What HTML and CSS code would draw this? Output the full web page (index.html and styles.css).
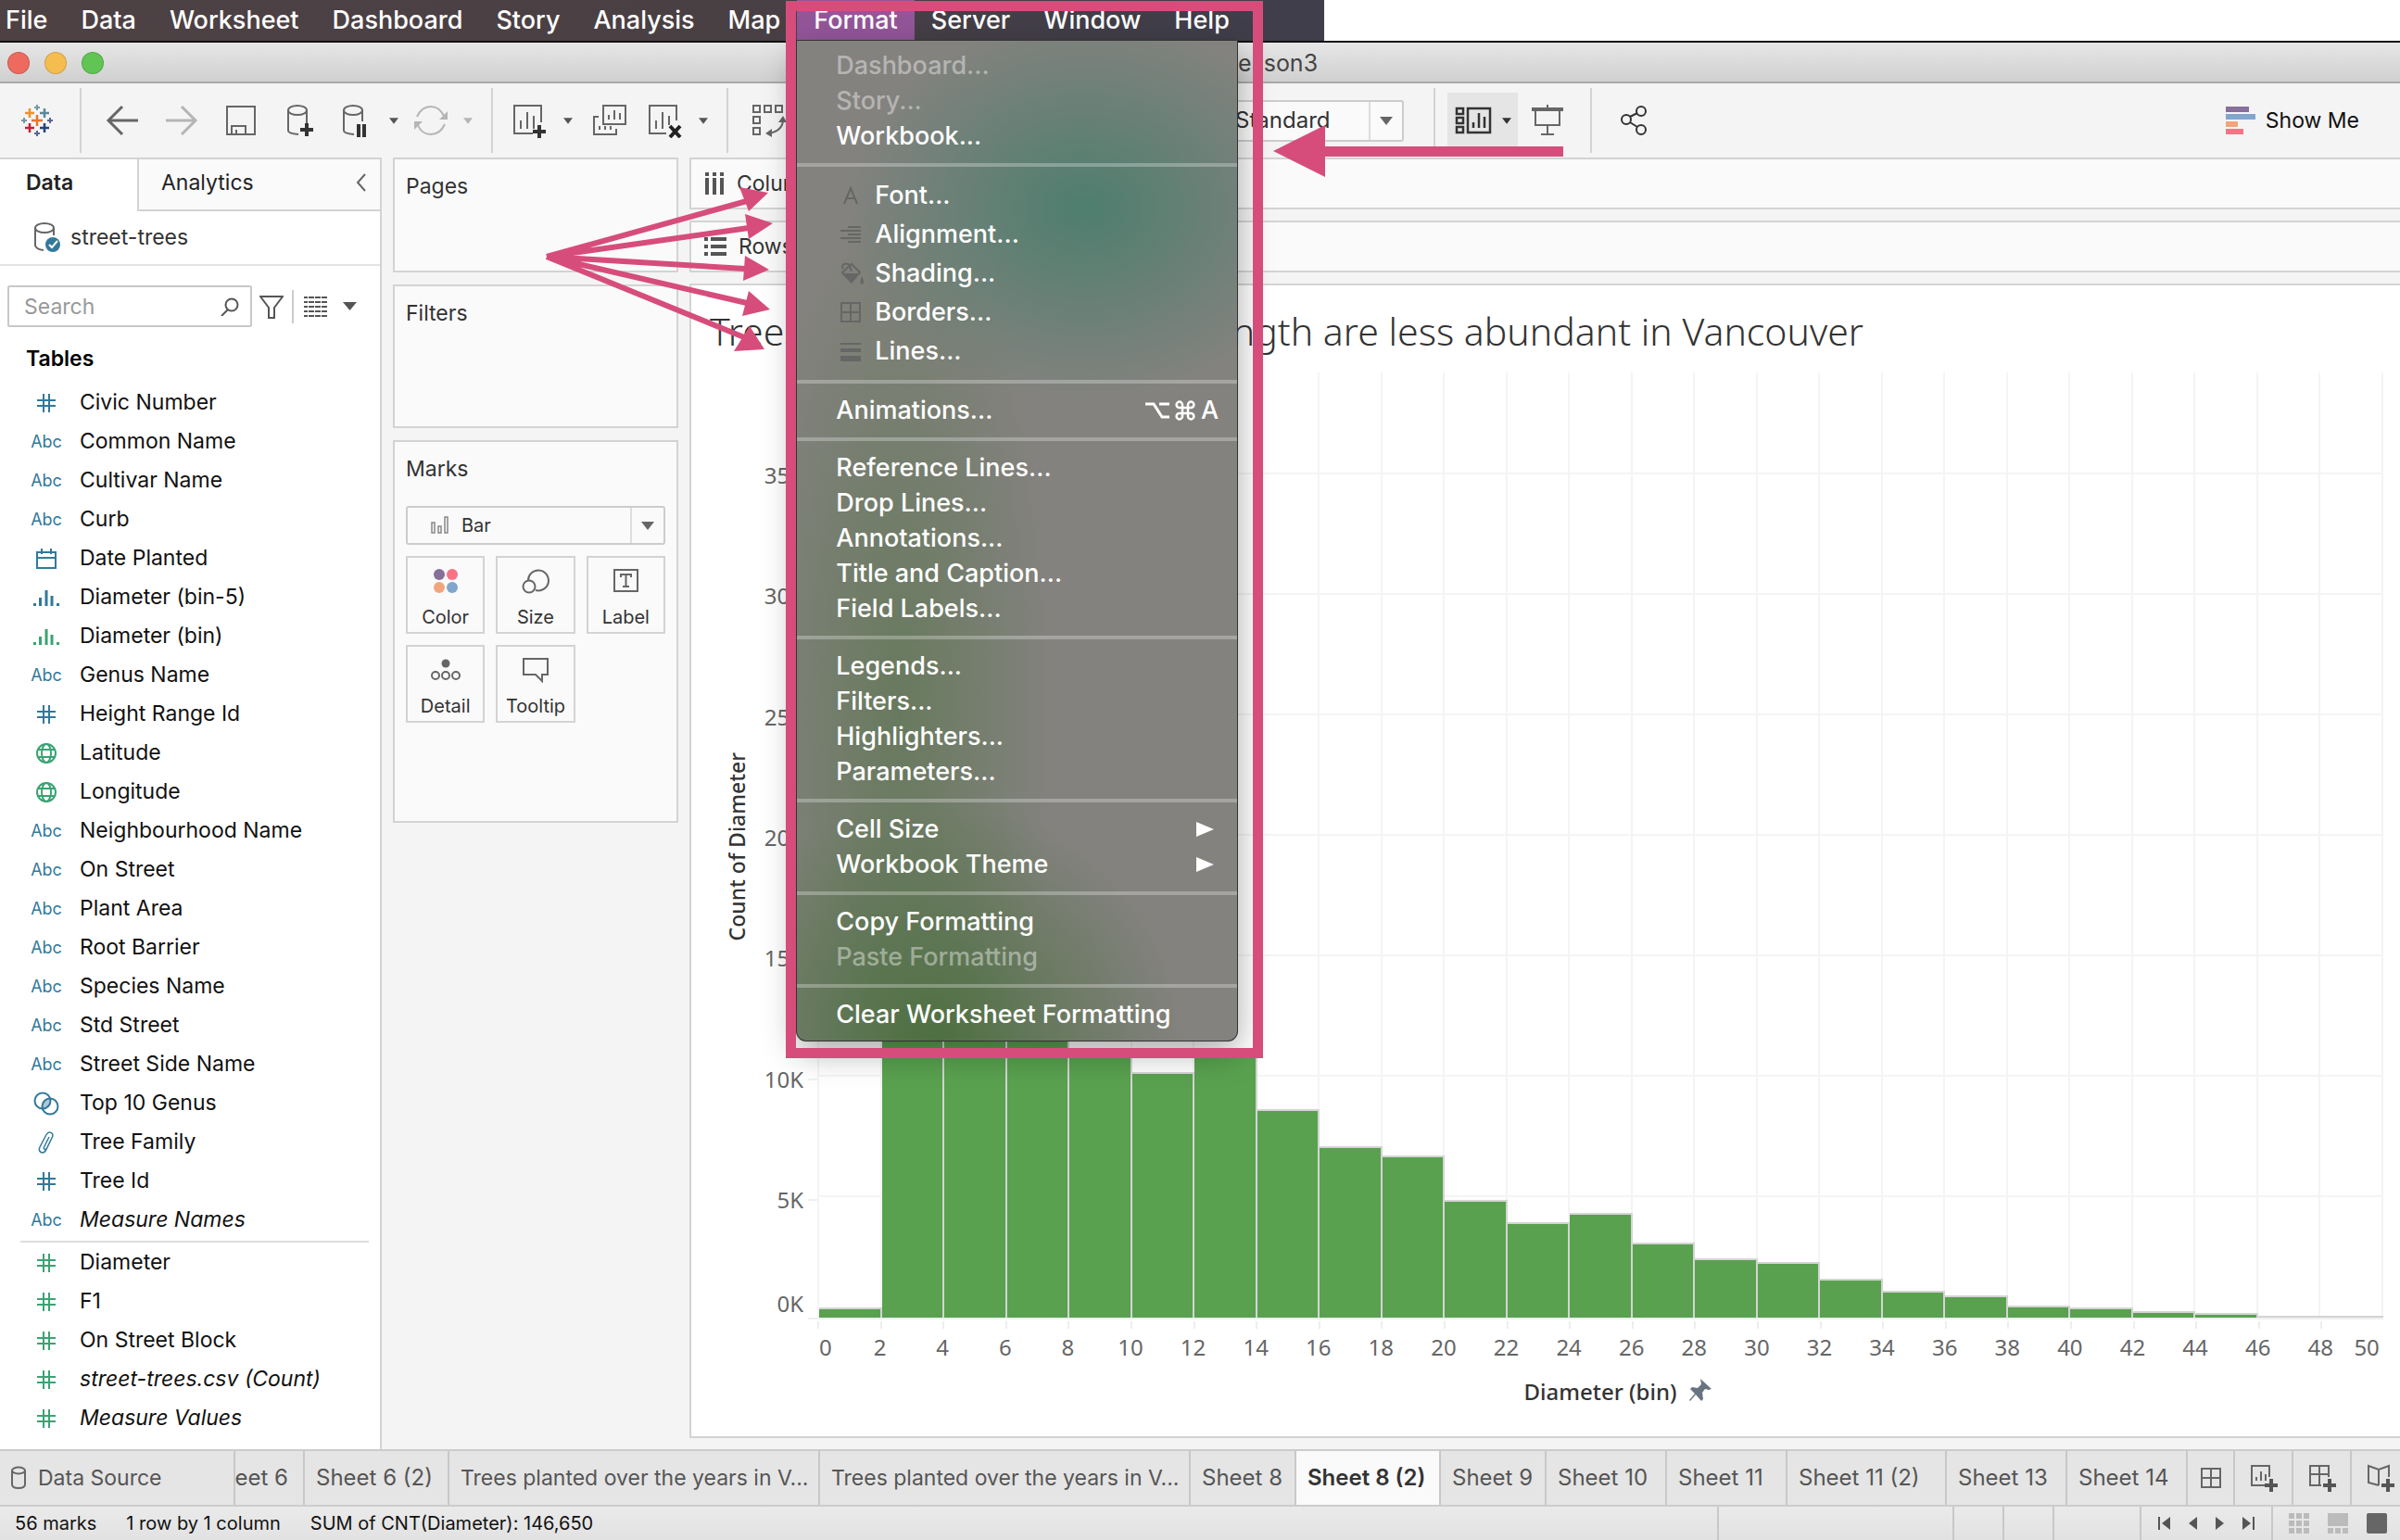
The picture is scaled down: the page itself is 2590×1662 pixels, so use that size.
FILE: index.html
```html
<!DOCTYPE html>
<html lang="en">
<head>
<meta charset="utf-8">
<title>Lesson3</title>
<link rel="stylesheet" href="styles.css">
</head>
<body>
<svg class="sprite" aria-hidden="true">
  <symbol id="hash" viewBox="0 0 20 20"><path d="M7 0v20M13 0v20M0 7h20M0 13h20" fill="none" stroke="currentColor" stroke-width="2"/></symbol>
  <symbol id="bins" viewBox="0 0 28 20"><path d="M1.500 16v3M7.500 10v9M14 2v17M20 8v11M26.500 16v3" fill="none" stroke="currentColor" stroke-width="3"/></symbol>
  <symbol id="globe" viewBox="0 0 24 24"><g fill="none" stroke="currentColor" stroke-width="2"><circle cx="12" cy="12" r="10"/><ellipse cx="12" cy="12" rx="5" ry="10"/><path d="M3 8h18M3 16h18"/></g></symbol>
  <symbol id="date" viewBox="0 0 24 22"><path d="M2 4h20v17H2zM2 10h20M7 0v6M17 0v6" fill="none" stroke="currentColor" stroke-width="2"/></symbol>
  <symbol id="set" viewBox="0 0 28 26"><g fill="none" stroke="currentColor" stroke-width="2"><circle cx="10" cy="10" r="8.500"/><circle cx="18" cy="16" r="8.500"/></g><path d="M10 13a8.500 8.500 0 0 1 8-5.500 8.500 8.500 0 0 1-8 11z" fill="currentColor" opacity=".4"/></symbol>
  <symbol id="clip" viewBox="0 0 22 26"><path d="M14 7L8.500 18c-1 2.500 2 3.500 3 1.300L17.500 7c2-4.500-4-7-6.500-2.500L4 18c-2.500 5 3.500 8.500 6.500 3.500L16 10" fill="none" stroke="currentColor" stroke-width="1.500"/></symbol>
  <symbol id="caret" viewBox="0 0 12 8"><path d="M0 0h12L6 8z" fill="currentColor"/></symbol>
  <symbol id="plus" viewBox="0 0 14 14"><path d="M7 0v14M0 7h14" stroke="#333" stroke-width="4"/></symbol>
</svg>

<header class="menubar">
  <nav class="menus" aria-label="Application">
    <button class="menu-title">File</button>
    <button class="menu-title">Data</button>
    <button class="menu-title">Worksheet</button>
    <button class="menu-title">Dashboard</button>
    <button class="menu-title">Story</button>
    <button class="menu-title">Analysis</button>
    <button class="menu-title">Map</button>
    <div class="menu-open">
      <button class="menu-title is-open" aria-expanded="true">Format</button>
      <div class="menu" role="menu">
        <button class="item" role="menuitem" disabled>Dashboard...</button>
        <button class="item" role="menuitem" disabled>Story...</button>
        <button class="item" role="menuitem">Workbook...</button>
        <hr class="rule">
        <button class="item item-icon" role="menuitem"><svg width="24" height="24"><path d="M5 21L12 4l7 17M8 15h8" fill="none" stroke="currentColor" stroke-width="2"/></svg>Font...</button>
        <button class="item item-icon" role="menuitem"><svg width="24" height="24"><path d="M9 4h14M1 8h22M9 12h14M1 16h22M9 20h14" stroke="currentColor" stroke-width="2"/></svg>Alignment...</button>
        <button class="item item-icon" role="menuitem"><svg width="26" height="26"><path d="M3 12L13 3l9 9-9 9zM4 8c-4-4 4-8 7-3l2 6" fill="none" stroke="currentColor" stroke-width="2"/><path d="M2 13h20l-9 11zM24 16q4 8 0 9-3-1 0-9" fill="currentColor"/></svg>Shading...</button>
        <button class="item item-icon" role="menuitem"><svg width="24" height="24"><path d="M2 2h20v20H2zM12 2v20M2 12h20" fill="none" stroke="currentColor" stroke-width="2"/></svg>Borders...</button>
        <button class="item item-icon" role="menuitem"><svg width="24" height="24"><path d="M1 3h22v2H1zM1 9h22v4H1zM1 17h22v6H1z" fill="currentColor"/></svg>Lines...</button>
        <hr class="rule">
        <button class="item" role="menuitem">Animations...<kbd class="keys"><svg width="26" height="20"><path d="M0 3h9l9 14h8M15 3h11" fill="none" stroke="currentColor" stroke-width="3"/></svg><svg width="22" height="22"><path d="M8 8V4.800A3.200 3.200 0 1 0 4.800 8h12.400A3.200 3.200 0 1 0 14 4.800v12.400A3.200 3.200 0 1 0 17.200 14H4.800A3.200 3.200 0 1 0 8 17.200z" fill="none" stroke="currentColor" stroke-width="2.500"/></svg>A</kbd></button>
        <hr class="rule">
        <button class="item" role="menuitem">Reference Lines...</button>
        <button class="item" role="menuitem">Drop Lines...</button>
        <button class="item" role="menuitem">Annotations...</button>
        <button class="item" role="menuitem">Title and Caption...</button>
        <button class="item" role="menuitem">Field Labels...</button>
        <hr class="rule">
        <button class="item" role="menuitem">Legends...</button>
        <button class="item" role="menuitem">Filters...</button>
        <button class="item" role="menuitem">Highlighters...</button>
        <button class="item" role="menuitem">Parameters...</button>
        <hr class="rule">
        <button class="item" role="menuitem">Cell Size<svg class="more" width="20" height="16"><path d="M0 0l19 8L0 16z" fill="currentColor"/></svg></button>
        <button class="item" role="menuitem">Workbook Theme<svg class="more" width="20" height="16"><path d="M0 0l19 8L0 16z" fill="currentColor"/></svg></button>
        <hr class="rule">
        <button class="item" role="menuitem">Copy Formatting</button>
        <button class="item" role="menuitem" disabled>Paste Formatting</button>
        <hr class="rule">
        <button class="item" role="menuitem">Clear Worksheet Formatting</button>
      </div>
    </div>
    <button class="menu-title">Server</button>
    <button class="menu-title">Window</button>
    <button class="menu-title">Help</button>
  </nav>
</header>

<div class="titlebar">
  <div class="lights"><span class="light red"></span><span class="light amber"></span><span class="light green"></span></div>
  <h1 class="window-title">Tableau -<svg width="24" height="28"><path d="M2 2h14l6 6v18H2z" fill="#fff" stroke="#888" stroke-width="2"/></svg>Lesson3</h1>
</div>

<div class="toolbar">
  <button class="tool tool-logo" aria-label="Start page"><svg width="34" height="34" viewBox="0 0 34 34"><g fill="none" stroke-width="2.500"><path d="M17 11v12M11 17h12" stroke="#e8762c"/><path d="M9 4v10M4 9h10" stroke="#eb912c"/><path d="M25 4v10M20 9h10" stroke="#59879b"/><path d="M9 20v10M4 25h10" stroke="#c72035"/><path d="M25 20v10M20 25h10" stroke="#1f447e"/><path d="M17 0v6M14 3h6M3 14v6M0 17h6" stroke="#7199a6" stroke-width="2"/><path d="M17 28v6M14 31h6M31 14v6M28 17h6" stroke="#5b6591" stroke-width="2"/></g></svg></button>
  <span class="sep"></span>
  <button class="tool" aria-label="Back"><svg width="36" height="34"><path d="M18 2L3 17l15 15M3 17h32" fill="none" stroke="#666" stroke-width="3"/></svg></button>
  <button class="tool" aria-label="Forward"><svg width="36" height="34"><path d="M18 2l15 15-15 15M33 17H1" fill="none" stroke="#b5b5b5" stroke-width="3"/></svg></button>
  <button class="tool" aria-label="Save"><svg width="34" height="34"><path d="M2 2h30v30H2zM7 32v-9h15v9M12 32v-5" fill="none" stroke="#666" stroke-width="2"/></svg></button>
  <button class="tool" aria-label="New data source"><svg width="32" height="36"><g fill="none" stroke="#666" stroke-width="2"><ellipse cx="13" cy="7" rx="10" ry="5"/><path d="M3 7v22q0 3 11 4M23 7v14"/></g><use href="#plus" x="16" y="21" width="14" height="14"/></svg></button>
  <button class="tool tool-narrow" aria-label="Pause auto updates"><svg width="32" height="36"><g fill="none" stroke="#666" stroke-width="2"><ellipse cx="13" cy="7" rx="10" ry="5"/><path d="M3 7v22q0 3 11 4M23 7v12"/></g><path d="M19 22v14M25 22v14" stroke="#333" stroke-width="4"/></svg></button>
  <button class="drop" aria-label="Pause options"><svg width="10" height="7"><use href="#caret"/></svg></button>
  <button class="tool tool-refresh muted" aria-label="Run update"><svg width="36" height="34"><path d="M3 13Q8 2 18 2q9 0 14 10M33 21q-5 11-15 11Q8 32 4 22" fill="none" stroke="currentColor" stroke-width="2"/><path d="M36 7v9h-9zM0 27v-9h9z" fill="currentColor"/></svg></button>
  <button class="drop muted" aria-label="Update options"><svg width="10" height="7"><use href="#caret"/></svg></button>
  <span class="sep sep-wide"></span>
  <button class="tool tool-narrow" aria-label="New worksheet"><svg width="38" height="38"><path d="M22 33H2V3h29v18M9 28v-9M16 28V10M23 28V14" fill="none" stroke="#666" stroke-width="2"/><path d="M29 24v14M22 31h14" stroke="#333" stroke-width="4"/></svg></button>
  <button class="drop" aria-label="New worksheet options"><svg width="10" height="7"><use href="#caret"/></svg></button>
  <button class="tool" aria-label="Duplicate"><svg width="38" height="36"><path d="M12 2h24v20H12zM18 17v-5M24 17V7M30 17v-7M7 14H2v19h24v-6M8 28v-4M14 28v-4M20 28v-4" fill="none" stroke="#666" stroke-width="2"/></svg></button>
  <button class="tool tool-narrow" aria-label="Clear sheet"><svg width="38" height="38"><path d="M20 33H2V3h29v16M9 28v-9M16 28V10M23 24V14" fill="none" stroke="#666" stroke-width="2"/><path d="M24 25l11 12M35 25L24 37" stroke="#222" stroke-width="4"/></svg></button>
  <button class="drop" aria-label="Clear options"><svg width="10" height="7"><use href="#caret"/></svg></button>
  <span class="sep sep-wide"></span>
  <div class="tools-mid">
    <button class="tool" aria-label="Swap rows and columns"><svg width="38" height="36"><path d="M2 2h7v7H2zM14 2h7v7h-7zM26 2h7v7h-7zM2 14h7v7H2zM2 26h7v7H2zM34 17q0 12-15 15" fill="none" stroke="#666" stroke-width="2"/><path d="M29 20l5-7 4 7zM22 27v9l-7-4z" fill="#666"/></svg></button>
    <label class="select select-fit"><select aria-label="Fit"><option>Standard</option></select><span class="select-arrow"><svg width="14" height="9"><path d="M0 0h14L7 9z" fill="#666"/></svg></span></label>
  </div>
  <span class="sep sep-fit"></span>
  <button class="tool tool-on" aria-label="Show cards"><svg width="40" height="30"><path d="M2 2h7v6H2zM2 12h7v6H2zM2 22h7v6H2zM14 2h24v26H14zM20 23v-6M26 23V7M32 23V11" fill="none" stroke="#333" stroke-width="2.500"/></svg><svg width="10" height="7"><use href="#caret"/></svg></button>
  <button class="tool" aria-label="Presentation mode"><svg width="34" height="34"><path d="M0 3h34v4H0z" fill="#666"/><path d="M17 0v3M4 7v15h26V7M17 22v9M10 32h14" fill="none" stroke="#666" stroke-width="2"/></svg></button>
  <span class="sep sep-share"></span>
  <button class="tool" aria-label="Share"><svg width="32" height="34"><g fill="none" stroke="#333" stroke-width="2"><circle cx="7" cy="16" r="5"/><circle cx="23" cy="7" r="5"/><circle cx="23" cy="27" r="5"/><path d="M11 13l8-4M11 19l8 5"/></g></svg></button>
  <button class="show-me"><svg width="32" height="30"><path d="M0 0h25v6H0z" fill="#866f9b"/><path d="M0 8h32v6H0z" fill="#82a5ce"/><path d="M0 16h13v6H0z" fill="#f2a57c"/><path d="M0 24h19v6H0z" fill="#fb7185"/></svg>Show Me</button>
</div>

<main class="work">
  <aside class="side">
    <div class="side-tabs">
      <button class="side-tab is-active">Data</button>
      <button class="side-tab">Analytics<svg width="12" height="20"><path d="M10 1L2 10l8 9" fill="none" stroke="#666" stroke-width="2"/></svg></button>
    </div>
    <div class="source"><svg width="30" height="32"><g fill="none" stroke="#666" stroke-width="2"><ellipse cx="12" cy="6" rx="10" ry="5"/><path d="M2 6v19q1 4 9 5M22 6v8"/></g><circle cx="21" cy="24" r="8" fill="#32799b"/><path d="M17 24l3 3 6-7" fill="none" stroke="#fff" stroke-width="2"/></svg>street-trees</div>
    <div class="search-row">
      <label class="search"><input type="text" placeholder="Search" aria-label="Search fields"><svg width="20" height="20"><circle cx="12" cy="8" r="6.500" fill="none" stroke="#555" stroke-width="2"/><path d="M8 13l-7 7" stroke="#555" stroke-width="2"/></svg></label>
      <button class="plain" aria-label="Filter"><svg width="26" height="26"><path d="M1 2h24l-9 12v11h-6V14z" fill="none" stroke="#555" stroke-width="2"/></svg></button>
      <span class="tick"></span>
      <button class="plain plain-view" aria-label="View"><svg width="25" height="22"><path d="M0 1h25M0 6h25M0 11h25M0 16h25M0 21h25" stroke="#555" stroke-width="2" stroke-dasharray="4 1 6 1 6 1 6 1"/></svg><svg width="15" height="9"><path d="M0 0h15L7.500 9z" fill="#555"/></svg></button>
    </div>
    <h2 class="tables">Tables</h2>
    <ul class="fields">
      <li class="field"><span class="kind"><svg width="20" height="20"><use href="#hash"/></svg></span>Civic Number</li>
      <li class="field"><span class="kind">Abc</span>Common Name</li>
      <li class="field"><span class="kind">Abc</span>Cultivar Name</li>
      <li class="field"><span class="kind">Abc</span>Curb</li>
      <li class="field"><span class="kind"><svg width="24" height="22"><use href="#date"/></svg></span>Date Planted</li>
      <li class="field"><span class="kind"><svg width="28" height="20"><use href="#bins"/></svg></span>Diameter (bin-5)</li>
      <li class="field"><span class="kind kind-green"><svg width="28" height="20"><use href="#bins"/></svg></span>Diameter (bin)</li>
      <li class="field"><span class="kind">Abc</span>Genus Name</li>
      <li class="field"><span class="kind"><svg width="20" height="20"><use href="#hash"/></svg></span>Height Range Id</li>
      <li class="field"><span class="kind kind-green"><svg width="24" height="24"><use href="#globe"/></svg></span>Latitude</li>
      <li class="field"><span class="kind kind-green"><svg width="24" height="24"><use href="#globe"/></svg></span>Longitude</li>
      <li class="field"><span class="kind">Abc</span>Neighbourhood Name</li>
      <li class="field"><span class="kind">Abc</span>On Street</li>
      <li class="field"><span class="kind">Abc</span>Plant Area</li>
      <li class="field"><span class="kind">Abc</span>Root Barrier</li>
      <li class="field"><span class="kind">Abc</span>Species Name</li>
      <li class="field"><span class="kind">Abc</span>Std Street</li>
      <li class="field"><span class="kind">Abc</span>Street Side Name</li>
      <li class="field"><span class="kind"><svg width="28" height="26"><use href="#set"/></svg></span>Top 10 Genus</li>
      <li class="field"><span class="kind"><svg width="22" height="26"><use href="#clip"/></svg></span>Tree Family</li>
      <li class="field"><span class="kind"><svg width="20" height="20"><use href="#hash"/></svg></span>Tree Id</li>
      <li class="field field-auto"><span class="kind">Abc</span>Measure Names</li>
    </ul>
    <ul class="fields measures">
      <li class="field"><span class="kind kind-green"><svg width="20" height="20"><use href="#hash"/></svg></span>Diameter</li>
      <li class="field"><span class="kind kind-green"><svg width="20" height="20"><use href="#hash"/></svg></span>F1</li>
      <li class="field"><span class="kind kind-green"><svg width="20" height="20"><use href="#hash"/></svg></span>On Street Block</li>
      <li class="field field-auto"><span class="kind kind-green"><svg width="20" height="20"><use href="#hash"/></svg></span>street-trees.csv (Count)</li>
      <li class="field field-auto"><span class="kind kind-green"><svg width="20" height="20"><use href="#hash"/></svg></span>Measure Values</li>
    </ul>
  </aside>

  <div class="cards">
    <section class="card card-pages"><h2 class="card-title">Pages</h2></section>
    <section class="card card-filters"><h2 class="card-title">Filters</h2></section>
    <section class="card card-marks">
      <h2 class="card-title">Marks</h2>
      <label class="select select-mark"><svg class="mark-icon" width="20" height="20"><path d="M2 7h3v11H2zM9 11h3v7H9zM16 1h3v17h-3z" fill="none" stroke="#888" stroke-width="1.500"/></svg><select aria-label="Mark type"><option>Bar</option></select><span class="select-arrow"><svg width="14" height="9"><path d="M0 0h14L7 9z" fill="#666"/></svg></span></label>
      <div class="marks">
        <button class="mark"><svg width="28" height="28"><circle cx="7" cy="7" r="6" fill="#866f9b"/><circle cx="21" cy="7" r="6" fill="#fb7185"/><circle cx="7" cy="21" r="6" fill="#f2a57c"/><circle cx="21" cy="21" r="6" fill="#82a5ce"/></svg>Color</button>
        <button class="mark"><svg width="30" height="28"><g fill="none" stroke="#666" stroke-width="2"><path d="M7 14a11 11 0 1 1 8 10"/><circle cx="8" cy="20" r="6.500"/></g></svg>Size</button>
        <button class="mark"><svg width="28" height="28"><path d="M2 2h25v23H2zM9 10V7h11v3M14.500 7v13M11 20h7" fill="none" stroke="#666" stroke-width="2"/></svg>Label</button>
        <button class="mark"><svg width="32" height="28"><circle cx="16" cy="7" r="4.500" fill="#666"/><g fill="none" stroke="#666" stroke-width="2"><circle cx="5" cy="20" r="4"/><circle cx="16" cy="20" r="4"/><circle cx="27" cy="20" r="4"/></g></svg>Detail</button>
        <button class="mark"><svg width="28" height="28"><path d="M1 2h26v17h-6v7l-7-7H1z" fill="none" stroke="#666" stroke-width="2"/></svg>Tooltip</button>
      </div>
    </section>
  </div>

  <div class="sheet">
    <div class="shelf"><svg width="22" height="24"><path d="M3 0v4M11 0v4M19 0v4M3 6v18M11 6v18M19 6v18" stroke="#555" stroke-width="4"/></svg>Columns</div>
    <div class="shelf"><svg width="24" height="24"><path d="M0 4h4M0 12h4M0 20h4M7 4h17M7 12h17M7 20h17" stroke="#555" stroke-width="4"/></svg>Rows</div>
    <section class="view">
      <h2 class="view-title">Trees with a larger diameter length are less abundant in Vancouver</h2>
      <div class="chart">
        <div class="y-title"><span>Count of Diameter</span></div>
        <div class="y-axis">
          <span class="y-tick" style="bottom:89.200%">35K</span>
          <span class="y-tick" style="bottom:76.470%">30K</span>
          <span class="y-tick" style="bottom:63.730%">25K</span>
          <span class="y-tick" style="bottom:50.980%">20K</span>
          <span class="y-tick" style="bottom:38.240%">15K</span>
          <span class="y-tick" style="bottom:25.490%">10K</span>
          <span class="y-tick" style="bottom:12.750%">5K</span>
          <span class="y-tick y-zero" style="bottom:0%">0K</span>
        </div>
        <div class="plot">
          <span class="grid" style="bottom:89.200%"></span><span class="grid" style="bottom:76.470%"></span><span class="grid" style="bottom:63.730%"></span><span class="grid" style="bottom:50.980%"></span><span class="grid" style="bottom:38.240%"></span><span class="grid" style="bottom:25.490%"></span><span class="grid" style="bottom:12.750%"></span>
          <div class="col"><div class="bar" style="height:1.100%"></div></div>
          <div class="col"><div class="bar" style="height:74%"></div></div>
          <div class="col"><div class="bar" style="height:60%"></div></div>
          <div class="col"><div class="bar" style="height:45%"></div></div>
          <div class="col"><div class="bar" style="height:28%"></div></div>
          <div class="col"><div class="bar" style="height:26%"></div></div>
          <div class="col"><div class="bar" style="height:28%"></div></div>
          <div class="col"><div class="bar" style="height:22.100%"></div></div>
          <div class="col"><div class="bar" style="height:18.150%"></div></div>
          <div class="col"><div class="bar" style="height:17.150%"></div></div>
          <div class="col"><div class="bar" style="height:12.450%"></div></div>
          <div class="col"><div class="bar" style="height:10.100%"></div></div>
          <div class="col"><div class="bar" style="height:11.100%"></div></div>
          <div class="col"><div class="bar" style="height:7.950%"></div></div>
          <div class="col"><div class="bar" style="height:6.300%"></div></div>
          <div class="col"><div class="bar" style="height:5.900%"></div></div>
          <div class="col"><div class="bar" style="height:4.100%"></div></div>
          <div class="col"><div class="bar" style="height:2.800%"></div></div>
          <div class="col"><div class="bar" style="height:2.400%"></div></div>
          <div class="col"><div class="bar" style="height:1.250%"></div></div>
          <div class="col"><div class="bar" style="height:1.080%"></div></div>
          <div class="col"><div class="bar" style="height:0.690%"></div></div>
          <div class="col"><div class="bar" style="height:0.490%"></div></div>
          <div class="col"><div class="bar" style="height:0.200%"></div></div>
          <div class="col"><div class="bar" style="height:0.200%"></div></div>
        </div>
        <div class="x-axis">
          <span>0</span><span>2</span><span>4</span><span>6</span><span>8</span><span>10</span><span>12</span><span>14</span><span>16</span><span>18</span><span>20</span><span>22</span><span>24</span><span>26</span><span>28</span><span>30</span><span>32</span><span>34</span><span>36</span><span>38</span><span>40</span><span>42</span><span>44</span><span>46</span><span>48</span><span>50</span>
        </div>
        <div class="x-title">Diameter (bin)<svg width="26" height="26"><path d="M13 1l12 11-3 1-4-1-3 4 1 7-2 2-6-7-6 7-1-1 6-7-5-5 2-2 6 1 4-4z" fill="#687482"/></svg></div>
      </div>
    </section>
  </div>
</main>

<footer class="foot">
  <div class="tabs">
    <button class="tab tab-source"><svg width="18" height="26"><path d="M2 5v15q0 4 7 4t7-4V5" fill="none" stroke="#666" stroke-width="2"/><ellipse cx="9" cy="5" rx="7" ry="3.500" fill="none" stroke="#666" stroke-width="2"/></svg>Data Source</button>
    <button class="tab tab-cut">Sheet 6</button>
    <button class="tab tab-l">Sheet 6 (2)</button>
    <button class="tab tab-xl">Trees planted over the years in V...</button>
    <button class="tab tab-xl">Trees planted over the years in V...</button>
    <button class="tab tab-s">Sheet 8</button>
    <button class="tab tab-l is-current">Sheet 8 (2)</button>
    <button class="tab tab-s">Sheet 9</button>
    <button class="tab tab-m">Sheet 10</button>
    <button class="tab tab-m">Sheet 11</button>
    <button class="tab tab-lm">Sheet 11 (2)</button>
    <button class="tab tab-m">Sheet 13</button>
    <button class="tab tab-m">Sheet 14</button>
    <button class="tab tab-icon tab-sorter" aria-label="Show sheets"><svg width="24" height="24"><path d="M2 2h20v20H2zM12 2v20M2 12h20" fill="none" stroke="#666" stroke-width="2"/></svg></button>
    <button class="tab tab-icon" aria-label="New worksheet"><svg width="30" height="30"><path d="M16 23H2V2h19v12M7 18v-4M12 18V8M17 18v-7" fill="none" stroke="#666" stroke-width="2"/><path d="M23 16v14M16 23h14" stroke="#555" stroke-width="4"/></svg></button>
    <button class="tab tab-icon" aria-label="New dashboard"><svg width="30" height="30"><path d="M14 23H2V2h20v12M12 2v21M2 11h20" fill="none" stroke="#666" stroke-width="2"/><path d="M23 16v14M16 23h14" stroke="#555" stroke-width="4"/></svg></button>
    <button class="tab tab-icon" aria-label="New story"><svg width="30" height="30"><path d="M13 23L2 20V2l11 4 11-4v12M13 6v17" fill="none" stroke="#666" stroke-width="2"/><path d="M23 16v14M16 23h14" stroke="#555" stroke-width="4"/></svg></button>
  </div>
  <div class="status">
    <span>56 marks</span><span>1 row by 1 column</span><span>SUM of CNT(Diameter): 146,650</span>
    <div class="status-cells"><span class="cell cell-a"></span><span class="cell cell-b"></span><span class="cell cell-b"></span><span class="cell cell-c"></span>
      <div class="cell pager">
        <button class="plain" aria-label="First"><svg width="14" height="14"><path d="M0 0h2v14H0zM13 0v14L4 7z" fill="#555"/></svg></button>
        <button class="plain" aria-label="Previous"><svg width="9" height="14"><path d="M9 0v14L0 7z" fill="#555"/></svg></button>
        <button class="plain" aria-label="Next"><svg width="9" height="14"><path d="M0 0v14l9-7z" fill="#555"/></svg></button>
        <button class="plain" aria-label="Last"><svg width="14" height="14"><path d="M12 0h2v14h-2zM1 0v14l9-7z" fill="#555"/></svg></button>
      </div>
      <div class="cell modes">
        <button class="plain" aria-label="Sheet sorter"><svg width="22" height="22"><path d="M0 3h22M0 11h22M0 19h22" stroke="#bbb" stroke-width="6" stroke-dasharray="6 2"/></svg></button>
        <button class="plain" aria-label="Filmstrip"><svg width="22" height="22"><path d="M0 0h22v14H0z" fill="#bbb"/><path d="M0 19h22" stroke="#bbb" stroke-width="6" stroke-dasharray="6 2"/></svg></button>
        <button class="plain" aria-label="Tabs"><svg width="22" height="22"><rect width="22" height="22" rx="2" fill="#666"/></svg></button>
      </div>
    </div>
  </div>
</footer>

<svg class="notes" width="1700" height="1150" aria-hidden="true">
  <rect x="853.500" y="6.500" width="504" height="1130" fill="none" stroke="#d64d7b" stroke-width="11"/>
  <path d="M1374 163l56-28v23h257v11h-257v22z" fill="#d64d7b"/>
  <path d="M590 277L806 217M590 277L808 246M590 277L804 290M590 277L806 327M590 277L803 364" stroke="#d64d7b" stroke-width="6"/>
  <path d="M829 208L798 202 808 228zM834 241L804 231 808 258zM830 291L804 276 802 303zM831 334L808 314 801 341zM825 377L809 352 792 379z" fill="#d64d7b"/>
</svg>
</body>
</html>
```
FILE: styles.css
```css
* { box-sizing: border-box; }
html { background: #f4f4f4; }
body {
  margin: 0;
  min-height: 100vh;
  display: flex;
  flex-direction: column;
  position: relative;
  overflow: hidden;
  font: 23px/30px Inter, "Liberation Sans", sans-serif;
  color: #111;
}
button, select, input { font: inherit; color: inherit; border: 0; background: none; padding: 0; margin: 0; border-radius: 0; }
h1, h2, ul { margin: 0; padding: 0; font-weight: 400; font-size: inherit; list-style: none; }
svg { display: block; flex: none; }
.sprite { position: absolute; width: 0; height: 0; }
.notes { position: absolute; top: 0; left: 0; z-index: 30; pointer-events: none; }

/* Menu bar */
.menubar { display: flex; height: 44px; background: #fff; }
.menus {
  display: flex;
  width: 1429px;
  background: linear-gradient(90deg, #4d4144, #4a4043 50%, #403e4a 90%);
}
.menu-title {
  height: 44px;
  padding: 0 18px;
  font-size: 27px;
  font-weight: 500;
  color: #fff;
  white-space: nowrap;
}
.menus > .menu-title:first-child { margin-left: -12px; }
.menu-open { position: relative; z-index: 20; }
.is-open { background: #935699; }
.menu {
  position: absolute;
  top: 44px;
  left: 0;
  width: 475px;
  display: flex;
  flex-direction: column;
  padding: 8px 0 9px;
  border-radius: 0 0 10px 10px;
  box-shadow: 0 0 0 1px #333, 0 12px 36px rgba(0, 0, 0, .35);
  background:
    radial-gradient(ellipse 260px 210px at 310px 180px, rgba(72, 126, 108, .9), rgba(72, 126, 108, 0)),
    radial-gradient(ellipse 270px 260px at 150px 1080px, rgba(66, 108, 52, .8), rgba(66, 108, 52, 0)),
    radial-gradient(ellipse 170px 560px at 110px 720px, rgba(80, 115, 66, .55), rgba(80, 115, 66, 0)),
    #84827f;
}
.item {
  display: flex;
  align-items: center;
  height: 38px;
  padding: 0 20px 0 42px;
  font-size: 27px;
  font-weight: 500;
  color: #fff;
  text-align: left;
  white-space: nowrap;
}
.item:disabled { color: rgba(255, 255, 255, .42); }
.item-icon { height: 42px; padding-left: 46px; gap: 12px; }
.item-icon svg { width: 26px; color: #666; }
.keys { margin-left: auto; display: flex; align-items: center; gap: 6px; font: inherit; }
.more { margin: 0 4px 0 auto; }
.rule { width: 100%; height: 4px; margin: 10px 0; border: 0; background: rgba(255, 255, 255, .28); }

/* Window title */
.titlebar {
  position: relative;
  display: flex;
  align-items: center;
  height: 46px;
  padding-top: 2px;
  border-top: 2px solid #111;
  border-bottom: 2px solid #a9a9a9;
  background: linear-gradient(#e6e6e6, #d0d0d0);
}
.lights { display: flex; gap: 16px; padding-left: 8px; }
.light { width: 24px; height: 24px; border-radius: 50%; border: 1px solid rgba(0, 0, 0, .15); }
.red { background: #ee6a5f; }
.amber { background: #f5bd4f; }
.green { background: #61c554; }
.window-title { position: absolute; left: 0; right: 0; display: flex; align-items: center; justify-content: center; gap: 9px; font-size: 25px; color: #444; }

/* Toolbar */
.toolbar { display: flex; align-items: center; height: 80px; background: #f4f4f4; color: #555; }
.sep { flex: none; width: 2px; height: 70px; margin-right: 12px; background: #d3d3d3; }
.sep-wide { margin-left: 12px; }
.sep-fit { margin-left: 32px; margin-right: 13px; }
.sep-share { margin-left: 14px; margin-right: 14px; }
.tool { flex: none; display: flex; align-items: center; justify-content: center; width: 64px; height: 60px; }
.tool-logo { width: 80px; margin-right: 6px; }
.tool-narrow { width: 56px; }
.tool-refresh { width: 54px; }
.drop { flex: none; width: 26px; height: 60px; display: flex; align-items: center; justify-content: center; }
.muted { color: #b5b5b5; }
.tool-on { width: 76px; gap: 11px; background: #e5e5e5; color: #333; }
.tools-mid { display: flex; align-items: center; justify-content: space-between; width: 717px; }
.select { position: relative; display: flex; align-items: center; border: 2px solid #ccc; border-radius: 3px; background: #fafafa; }
.select select { appearance: none; width: 100%; height: 100%; outline: 0; }
.select-arrow { position: absolute; top: 0; right: 0; bottom: 0; width: 36px; border-left: 2px solid #ddd; display: flex; align-items: center; justify-content: center; }
.select-fit { width: 196px; height: 45px; padding-left: 12px; font-size: 24px; color: #333; }
.show-me { display: flex; align-items: center; gap: 11px; margin-left: auto; padding-right: 44px; color: #111; }

/* Panels */
.work { flex: 1; display: flex; }
.side { flex: none; width: 412px; border-top: 2px solid #d3d3d3; border-right: 2px solid #d3d3d3; background: #fff; }
.side-tabs { display: flex; height: 56px; color: #222; }
.side-tab { display: flex; align-items: center; text-align: left; }
.side-tab.is-active { width: 148px; padding: 0 0 6px 28px; font-weight: 600; }
.side-tab:last-child { flex: 1; justify-content: space-between; padding: 0 14px 4px 24px; border-left: 2px solid #d3d3d3; border-bottom: 2px solid #d3d3d3; background: #fafafa; }
.source { display: flex; align-items: center; gap: 10px; height: 59px; padding: 0 0 2px 36px; border-bottom: 2px solid #e3e3e3; color: #333; }
.search-row { display: flex; align-items: center; padding: 21px 0 0 8px; }
.search { display: flex; align-items: center; width: 264px; height: 45px; padding: 0 12px 0 16px; border: 2px solid #c8c8c8; border-radius: 2px; }
.search input { flex: 1; min-width: 0; outline: 0; }
.search input::placeholder { color: #999; opacity: 1; }
.plain { display: flex; align-items: center; justify-content: center; }
.search-row .plain { margin-left: 8px; }
.tick { width: 2px; height: 36px; margin-left: 9px; background: #ccc; }
.search-row .plain-view { margin-left: 11px; gap: 17px; }
.tables { padding: 17px 0 9px 28px; font-weight: 600; color: #000; line-height: 34px; }
.field { display: flex; align-items: center; gap: 8px; height: 42px; padding: 0 0 0 22px; color: #111; white-space: nowrap; }
.field-auto { font-style: italic; }
.kind { flex: none; width: 56px; display: flex; justify-content: center; padding-top: 2px; font-size: 18px; font-style: normal; color: #32799b; }
.kind-green { color: #3ba373; }
.measures { margin: 2px 12px 0 22px; border-top: 2px solid #ddd; }
.measures .field { padding-left: 0; }

.cards { flex: none; display: flex; flex-direction: column; gap: 13px; width: 332px; padding: 0 12px; background: #f4f4f4; }
.card { border: 2px solid #d3d3d3; background: #fafafa; padding: 14px 12px 0; }
.card-title { color: #333; }
.card-pages { height: 124px; }
.card-filters { height: 155px; }
.card-marks { height: 413px; }
.select-mark { height: 42px; margin: 25px 0 12px; font-size: 20px; color: #333; }
.mark-icon { margin: 0 14px 0 24px; }
.marks { display: grid; grid-template-columns: repeat(3, 1fr); gap: 12px; }
.mark { display: flex; flex-direction: column; align-items: center; justify-content: space-between; height: 84px; padding: 11px 0 4px; border: 2px solid #d3d3d3; font-size: 20px; line-height: 24px; color: #333; }

.sheet { flex: 1; min-width: 0; display: flex; flex-direction: column; gap: 12px; padding-bottom: 12px; background: #f4f4f4; }
.shelf { display: flex; align-items: center; gap: 13px; height: 56px; padding-left: 14px; border: solid #d3d3d3; border-width: 2px 0 2px 2px; background: #fafafa; color: #333; }
.view { flex: 1; display: flex; flex-direction: column; border: solid #d3d3d3; border-width: 2px 0 2px 2px; background: #fff; }

/* Chart */
.view-title, .chart { font-family: "Noto Sans", "Open Sans", sans-serif; }
.view-title { padding: 25px 20px 21px; font-size: 41px; font-weight: 300; line-height: 48px; color: #333; white-space: nowrap; }
.chart { flex: 1; display: grid; grid-template-columns: 98px 38px 1fr; grid-template-rows: 1fr 47px 79px; padding: 0 18px 0 0; font-size: 24px; color: #666; }
.y-title { display: flex; align-items: center; justify-content: center; color: #333; font-weight: 500; font-size: 23px; }
.y-title span { writing-mode: vertical-rl; transform: rotate(180deg); padding-bottom: 2px; white-space: nowrap; }
.y-axis { position: relative; }
.y-tick { position: absolute; right: 15px; line-height: 30px; margin-bottom: -16px; }
.y-tick::after { content: ""; position: absolute; left: calc(100% + 5px); width: 10px; top: 14px; height: 2px; background: #f0f0f0; }
.y-zero { margin-bottom: 2px; }
.y-zero::after { top: 30px; }
.plot { position: relative; display: flex; border-left: 2px solid #f4f4f4; border-bottom: 2px solid #f0f0f0; }
.grid { position: absolute; left: 0; right: 0; height: 2px; background: #f4f4f4; }
.col { position: relative; flex: 1; display: flex; align-items: flex-end; border-right: 2px solid #f4f4f4; }
.bar { flex: 1; min-height: 2px; margin-right: -2px; background: #59a14f; border-top: 2px solid #d4d4d4; border-right: 2px solid #d4d4d4; }
.x-axis { grid-column: 3; display: flex; justify-content: space-between; padding-top: 15px; background: repeating-linear-gradient(90deg, #eee 0 2px, transparent 2px 4%) 0 2px / 100% 8px no-repeat; }
.x-axis span { width: 0; display: flex; justify-content: center; }
.x-axis span:first-child { justify-content: flex-start; text-indent: 2px; }
.x-axis span:last-child { justify-content: flex-end; margin: 0 4px 0 -4px; }
.x-title { grid-column: 3; display: flex; justify-content: center; gap: 12px; padding: 16px 0 0 38px; color: #333; font-weight: 500; }

/* Sheet tabs and status */
.foot { color: #111; }
.tabs { display: flex; height: 62px; border-top: 2px solid #ccc; border-bottom: 2px solid #ccc; background: #e5e5e5; overflow: hidden; }
.tab { flex: none; display: flex; align-items: center; justify-content: flex-start; padding-left: 12px; border-right: 2px solid #c8c8c8; font-size: 24px; color: #555; white-space: nowrap; overflow: hidden; }
.tab-source { width: 254px; gap: 12px; padding-left: 11px; font-size: 23px; }
.tab-cut { width: 75px; justify-content: flex-end; padding-right: 16px; }
.tab-s { width: 114px; }
.tab-m { width: 130px; }
.tab-l { width: 156px; }
.tab-lm { width: 172px; }
.tab-xl { width: 400px; font-size: 23px; }
.tab-icon { width: 63px; padding: 0; justify-content: center; }
.tab-sorter { width: 51px; }
.is-current { background: #fafafa; color: #333; font-weight: 600; }
.status { display: flex; align-items: center; gap: 32px; height: 36px; padding-left: 16px; background: linear-gradient(#eaeaea, #e2e2e2); font-size: 20px; }
.status-cells { display: flex; align-self: stretch; margin-left: auto; }
.cell { display: flex; align-items: center; border-left: 2px solid #c8c8c8; }
.cell-a { width: 254px; }
.cell-b { width: 54px; }
.cell-c { width: 94px; }
.pager { width: 142px; justify-content: space-around; padding: 0 8px; }
.modes { width: 139px; justify-content: space-between; padding: 0 14px 0 17px; }
```
